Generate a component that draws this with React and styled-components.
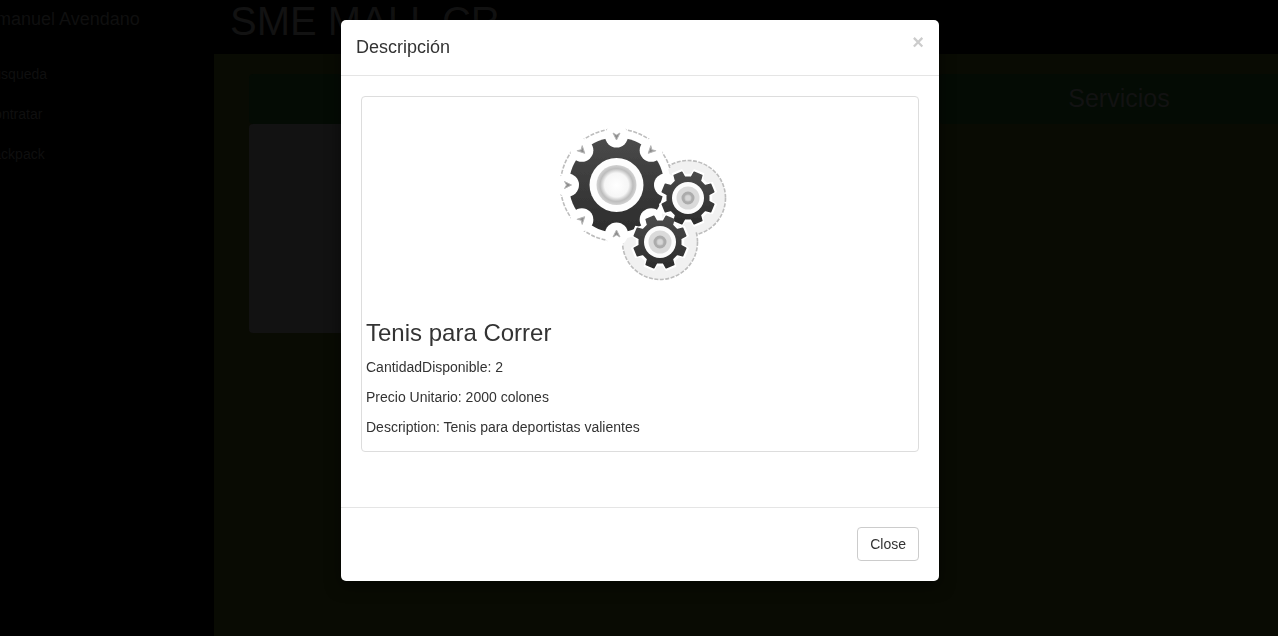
import React from "react";
import styled, { createGlobalStyle } from "styled-components";

const Global = createGlobalStyle`
  *, *::before, *::after { box-sizing: border-box; }
  body {
    margin: 0;
    background: #000;
    color: #333;
    font: 14px/20px "Liberation Sans", Arial, sans-serif;
    overflow: hidden;
  }
  h1, h2, h3, h4, p, ul { margin: 0; padding: 0; font-weight: 400; }
`;

const Page = styled.div`
  display: flex;
  min-height: 100vh;
  overflow: hidden;
`;

const Sidebar = styled.nav`
  flex: 0 0 214px;
  display: flex;
  justify-content: flex-end;
  overflow: hidden;
`;

const SidebarList = styled.ul`
  flex: 0 0 250px;
  padding: 0 20px;
  list-style: none;
`;

const SidebarItem = styled.li`
  line-height: 40px;
`;

const Brand = styled.li`
  height: 54px;
  font-size: 18px;
  line-height: 38px;
`;

const SidebarLink = styled.a`
  color: #0f0f0f;
  text-decoration: none;
`;

const Main = styled.main`
  flex: 1;
  min-width: 0;
  display: flex;
  flex-direction: column;
`;

const Title = styled.h1`
  padding: 0 16px;
  height: 54px;
  font-size: 40px;
  line-height: 42px;
  color: #121212;
`;

const Content = styled.div`
  flex: 1;
  display: flex;
  padding: 20px 0 0 35px;
  background: #090b03;
  overflow: hidden;
`;

const Column = styled.section`
  flex: ${(p) => (p.$wide ? "0 0 360px" : "1 1 0")};
  margin-right: ${(p) => (p.$wide ? "-21px" : "0")};
`;

const ColumnTitle = styled.h2`
  height: 50px;
  border-radius: 4px;
  background: #040b04;
  color: #121212;
  font-size: 25px;
  line-height: 48px;
  text-align: center;
`;

const Tile = styled.div`
  height: 209px;
  border-radius: 4px;
  background: #121212;
`;

const Overlay = styled.div`
  position: fixed;
  inset: 0;
  padding: 20px 20px 20px 22px;
  overflow: auto;
`;

const Dialog = styled.section`
  max-width: 598px;
  margin: 0 auto;
  border-radius: 5px;
  background: #fff;
  box-shadow: 0 5px 15px rgba(0, 0, 0, 0.5);
`;

const DialogHeader = styled.header`
  display: flex;
  justify-content: space-between;
  align-items: flex-start;
  padding: 15px;
  border-bottom: 1px solid #e5e5e5;
`;

const DialogTitle = styled.h4`
  font-size: 18px;
  line-height: 25px;
`;

const Dismiss = styled.button`
  padding: 0;
  border: 0;
  background: none;
  color: #ccc;
  font: bold 20px/15px "Liberation Sans", Arial, sans-serif;
`;

const DialogBody = styled.div`
  padding: 20px 20px 55px;
`;

const Thumbnail = styled.article`
  padding: 4px;
  border: 1px solid #ddd;
  border-radius: 4px;
`;

const Gears = styled.svg`
  display: block;
  width: 200px;
  height: 200px;
  margin: 4px auto 0;
`;

const Product = styled.h3`
  margin: 15px 0 11px;
  font-size: 24px;
  line-height: 26px;
`;

const Detail = styled.p`
  margin-bottom: 10px;
`;

const DialogFooter = styled.footer`
  display: flex;
  justify-content: flex-end;
  padding: 19px 20px 20px;
  border-top: 1px solid #e5e5e5;
`;

const CloseButton = styled.button`
  padding: 6px 12px;
  border: 1px solid #ccc;
  border-radius: 4px;
  background: #fff;
  color: #333;
  font: inherit;
`;

const polar = (cx, cy, r, deg) => {
  const a = (deg * Math.PI) / 180;
  return [cx + r * Math.cos(a), cy + r * Math.sin(a)];
};

function toothPath(cx, cy, outer, inner, teeth, start) {
  const step = 360 / teeth;
  const points = [];
  for (let i = 0; i < teeth; i++) {
    const a = start + i * step;
    points.push(
      polar(cx, cy, inner, a - step * 0.3),
      polar(cx, cy, outer, a - step * 0.2),
      polar(cx, cy, outer, a + step * 0.2),
      polar(cx, cy, inner, a + step * 0.3)
    );
  }
  return "M" + points.map((p) => p.map((n) => n.toFixed(2)).join(" ")).join("L") + "Z";
}

function SmallGear({ cx, cy }) {
  return (
    <g>
      <path
        d={toothPath(cx, cy, 26.5, 21, 8, 22.5)}
        fill="url(#gearDark)"
        stroke="url(#gearDark)"
        strokeWidth="1.5"
        strokeLinejoin="round"
      />
      <circle cx={cx} cy={cy} r="16" fill="#fcfcfc" />
      <circle cx={cx} cy={cy} r="11.5" fill="#dadada" />
      <circle cx={cx} cy={cy} r="5" fill="#c9c9c9" stroke="#acacac" strokeWidth="3" />
      <circle cx={cx} cy={cy} r="2.5" fill="#d6d6d6" />
    </g>
  );
}

function GearsPicture() {
  const big = [76.5, 80];
  const notches = [0, 45, 90, 135, 180, 225, 270, 315];
  return (
    <Gears viewBox="0 0 200 200" role="img" aria-label="Tenis para Correr">
      <defs>
        <linearGradient id="gearDark" x1="0" y1="0" x2="0" y2="1">
          <stop offset="0" stopColor="#4a4a4a" />
          <stop offset="1" stopColor="#2c2c2c" />
        </linearGradient>
        <radialGradient id="hub">
          <stop offset="0" stopColor="#fff" />
          <stop offset="0.6" stopColor="#f6f6f6" />
          <stop offset="0.82" stopColor="#bdbdbd" />
          <stop offset="1" stopColor="#d2d2d2" />
        </radialGradient>
        <filter id="soft">
          <feGaussianBlur stdDeviation="0.7" />
        </filter>
      </defs>
      <g filter="url(#soft)">
        <g fill="#f1f1f1" stroke="#bdbdbd" strokeWidth="1.6" strokeDasharray="4 1.5">
          <circle cx="148" cy="93" r="37.5" />
          <circle cx="120" cy="137" r="37.5" />
          <circle cx={big[0]} cy={big[1]} r="56" fill="#fff" />
        </g>
        <circle cx="148" cy="93" r="35" fill="#f1f1f1" />
        <circle cx="120" cy="137" r="35" fill="#f1f1f1" />
        <circle cx={big[0]} cy={big[1]} r="54" fill="#fff" />
        <circle cx={big[0]} cy={big[1]} r="47.5" fill="url(#gearDark)" />
        {notches.map((a) => {
          const [x, y] = polar(big[0], big[1], 49, a);
          return <circle key={a} cx={x} cy={y} r="11.5" fill="#fff" />;
        })}
        {notches.slice(2).map((a) => {
          const [x, y] = polar(big[0], big[1], 49, a);
          return (
            <path
              key={a}
              d="M-3.5-3 0-1 3.5-3 0 4Z"
              transform={`translate(${x} ${y}) rotate(${a + 90})`}
              fill="#8c8c8c"
              stroke="#b4b4b4"
              strokeLinejoin="round"
            />
          );
        })}
        <circle cx={big[0]} cy={big[1]} r="27" fill="#fdfdfd" />
        <circle cx={big[0]} cy={big[1]} r="20" fill="url(#hub)" />
        <path d={toothPath(148, 93, 28, 23, 8, 22.5)} fill="#fff" stroke="#fff" strokeWidth="3" />
        <path d={toothPath(120, 137, 28, 23, 8, 22.5)} fill="#fff" stroke="#fff" strokeWidth="3" />
        <SmallGear cx={148} cy={93} />
        <SmallGear cx={120} cy={137} />
      </g>
    </Gears>
  );
}

const links = ["Búsqueda", "Contratar", "Backpack"];

export default function App() {
  return (
    <>
      <Global />
      <Page>
        <Sidebar>
          <SidebarList>
            <Brand>
              <SidebarLink href="#">Emanuel Avendano</SidebarLink>
            </Brand>
            {links.map((label) => (
              <SidebarItem key={label}>
                <SidebarLink href="#">{label}</SidebarLink>
              </SidebarItem>
            ))}
          </SidebarList>
        </Sidebar>
        <Main>
          <Title>SME MALL CR</Title>
          <Content>
            <Column>
              <ColumnTitle />
              <Tile />
            </Column>
            <Column>
              <ColumnTitle />
            </Column>
            <Column $wide>
              <ColumnTitle>Servicios</ColumnTitle>
            </Column>
          </Content>
        </Main>
      </Page>
      <Overlay>
        <Dialog role="dialog" aria-labelledby="dialog-title">
          <DialogHeader>
            <DialogTitle id="dialog-title">Descripción</DialogTitle>
            <Dismiss type="button" aria-label="Close">×</Dismiss>
          </DialogHeader>
          <DialogBody>
            <Thumbnail>
              <GearsPicture />
              <Product>Tenis para Correr</Product>
              <Detail>CantidadDisponible: 2</Detail>
              <Detail>Precio Unitario: 2000 colones</Detail>
              <Detail>Description: Tenis para deportistas valientes</Detail>
            </Thumbnail>
          </DialogBody>
          <DialogFooter>
            <CloseButton type="button">Close</CloseButton>
          </DialogFooter>
        </Dialog>
      </Overlay>
    </>
  );
}
